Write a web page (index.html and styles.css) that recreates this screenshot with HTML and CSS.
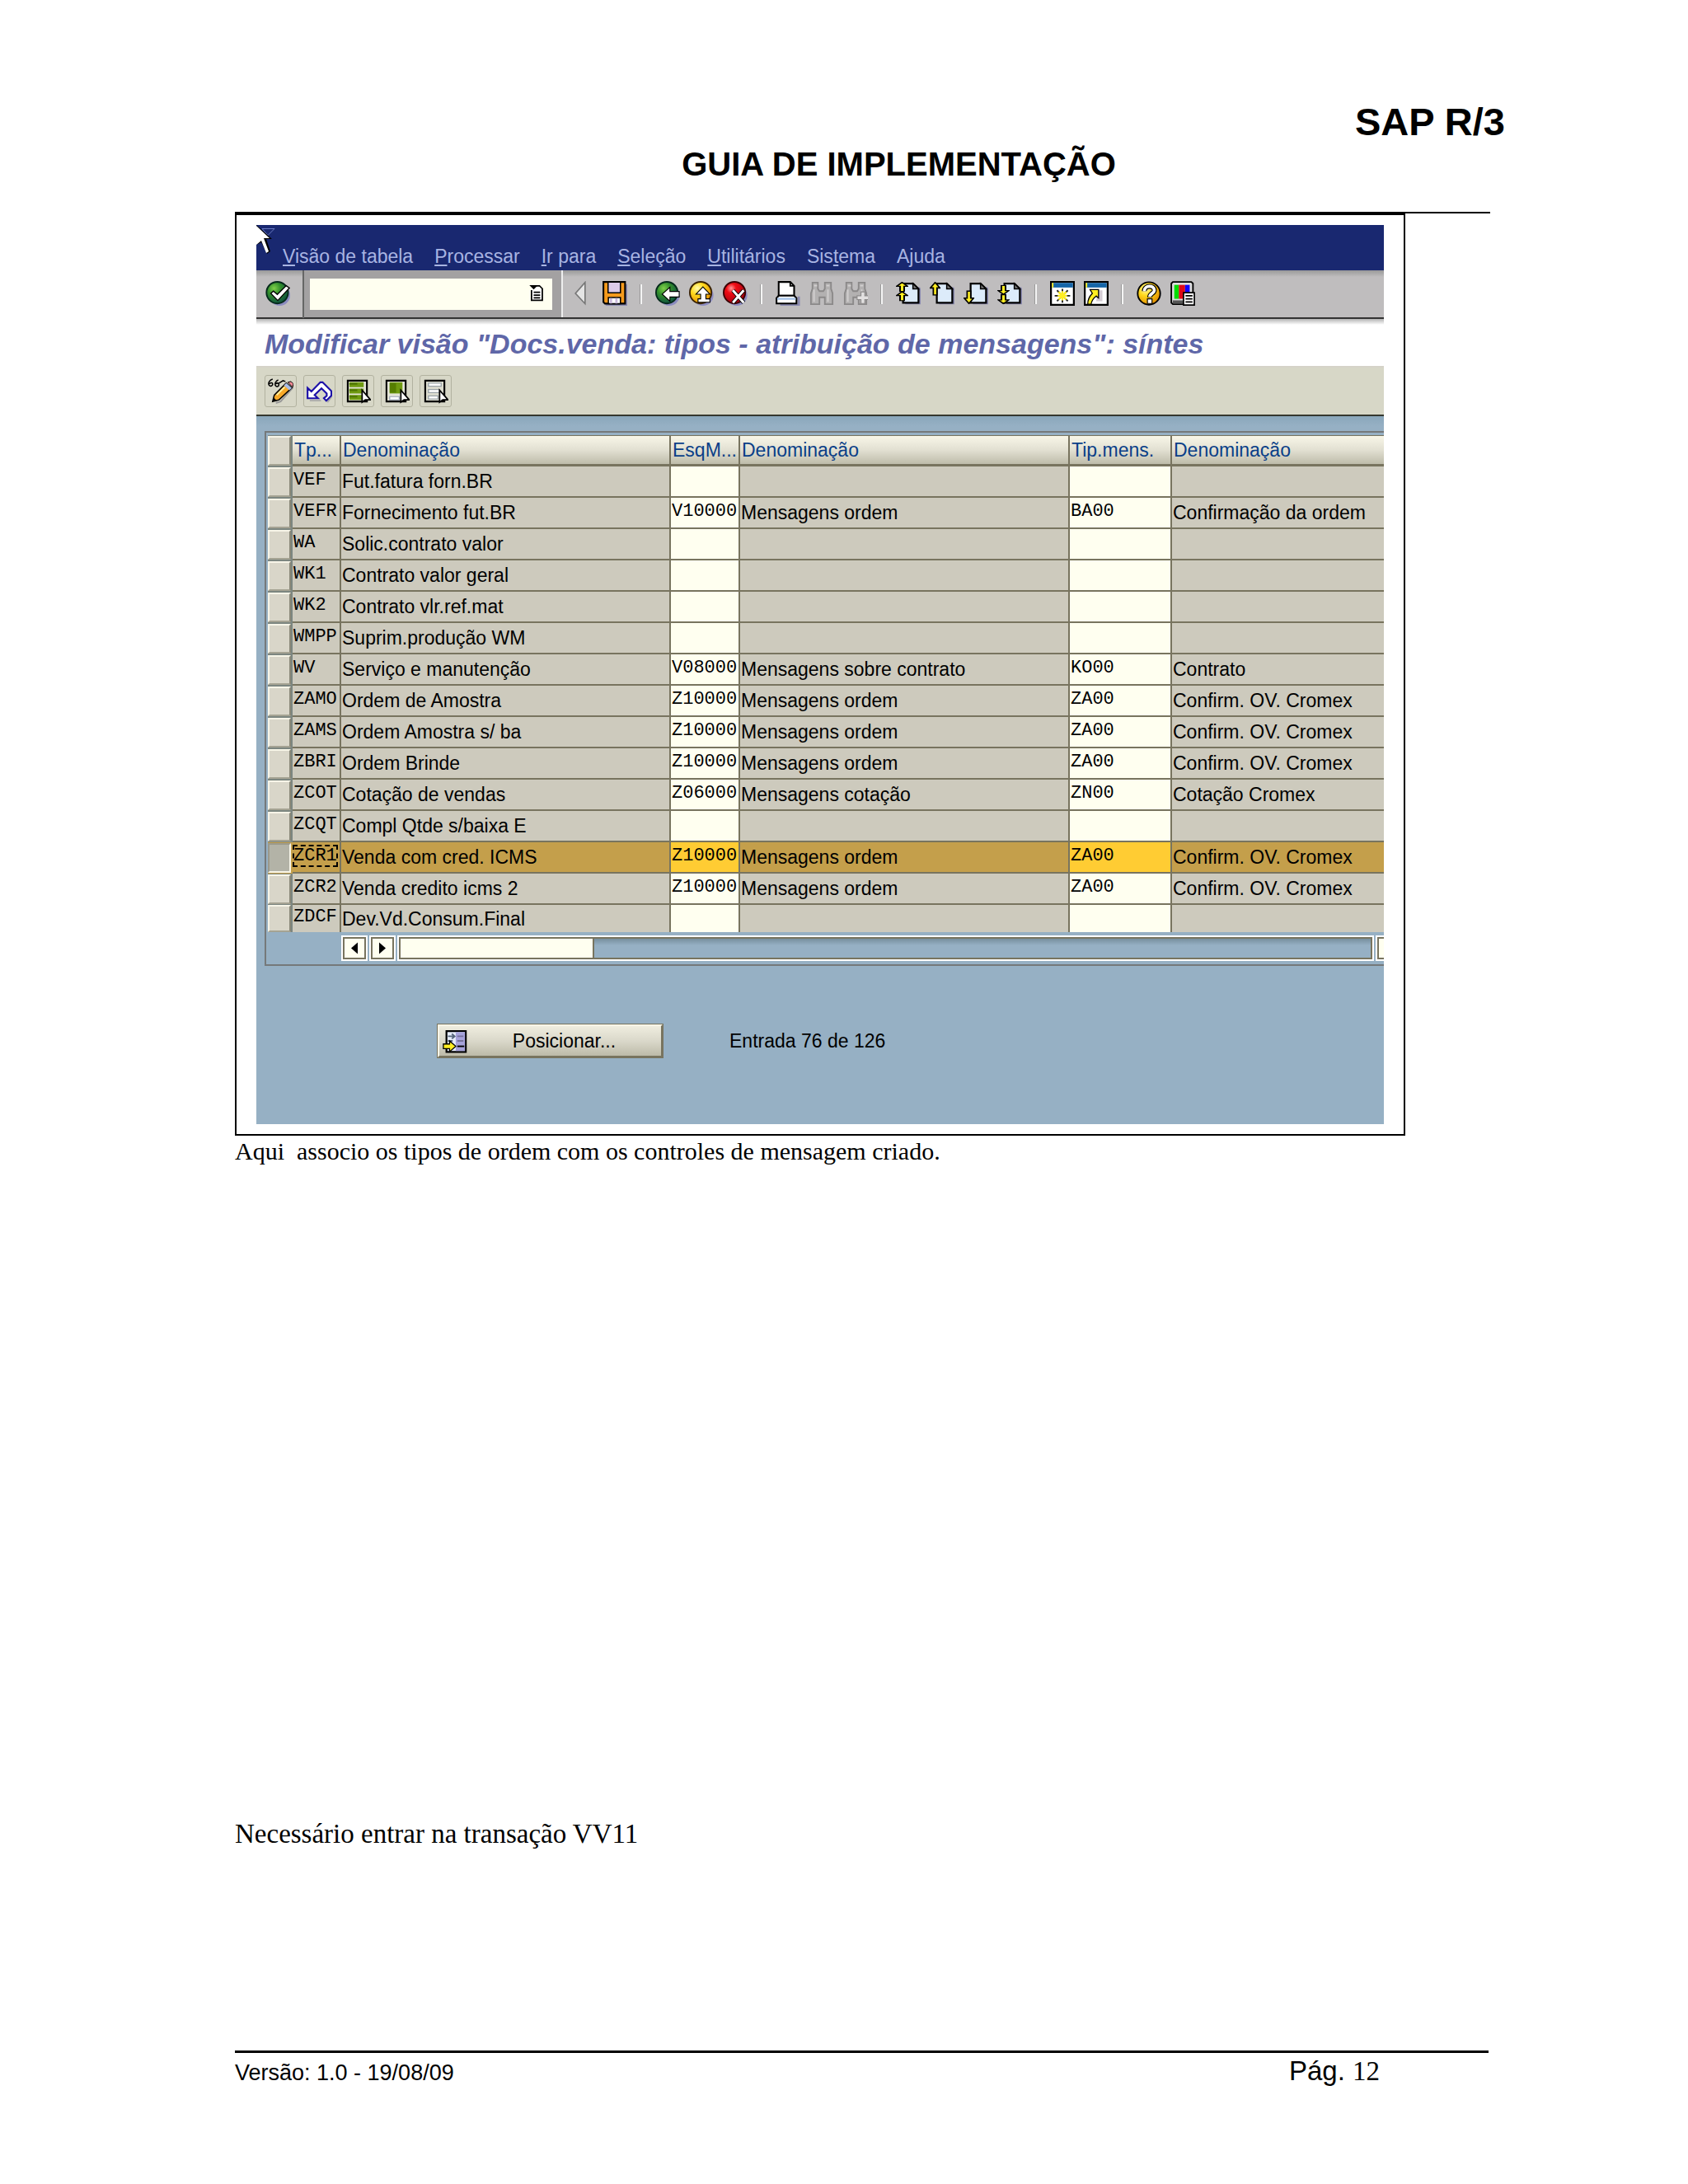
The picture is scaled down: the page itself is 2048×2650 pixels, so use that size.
FILE: index.html
```html
<!DOCTYPE html>
<html lang="pt-BR">
<head>
    <meta charset="UTF-8">
    <meta name="viewport" content="width=device-width, initial-scale=1.0">
    <title>SAP R/3 - Guia de Implementação</title>
    <link rel="stylesheet" href="styles.css">
</head>
<body>
    <!-- Shared pieces for the toolbar icons -->
    <svg class="defs" width="0" height="0" aria-hidden="true">
        <defs>
            <radialGradient id="green" cx="0.35" cy="0.3" r="0.75"><stop offset="0" stop-color="#7fd04a"/><stop offset="0.4" stop-color="#33902c"/><stop offset="1" stop-color="#0d5040"/></radialGradient>
            <radialGradient id="yellow" cx="0.35" cy="0.3" r="0.75"><stop offset="0" stop-color="#fffbb0"/><stop offset="0.4" stop-color="#ffd91c"/><stop offset="1" stop-color="#e08a00"/></radialGradient>
            <radialGradient id="red" cx="0.35" cy="0.3" r="0.75"><stop offset="0" stop-color="#ff9a9a"/><stop offset="0.3" stop-color="#f00c14"/><stop offset="1" stop-color="#a00010"/></radialGradient>
            <symbol id="page" viewBox="0 0 16 16">
                <path d="M6 4h9.500l.5 1v10H6z" fill="#8a8ab0"/>
                <path d="M4.600 1.600h6.500l3.500 3.500v9h-10z" fill="#dcebfa" stroke="#000" stroke-width="1.200"/>
                <path d="M11 1.600v3.500h3.500z" fill="#777" stroke="#000" stroke-width="0.800"/>
            </symbol>
            <symbol id="arrow" viewBox="0 0 6 8" preserveAspectRatio="none">
                <path d="M3 0.400L5.600 3.500H4v4.100H2V3.500H0.400z" fill="#ffee22" stroke="#000" stroke-width="0.800"/>
            </symbol>
            <symbol id="glass" viewBox="0 0 16 16">
                <path d="M1 15V8l1-3V1h3.500v4l1 1.500h2.500L10 5V1h4v4l1 3v7h-5v-4.500H6.500V15z" fill="#b3b1b1" stroke="#8b8989"/>
                <path d="M3 5.500v8M12 5.500v8M3 3h2M11 3h2" stroke="#d2d0d0" fill="none"/>
            </symbol>
        </defs>
    </svg>

    <div class="page">
        <header class="doc-header">
            <p class="product">SAP R/3</p>
            <h1>GUIA DE IMPLEMENTAÇÃO</h1>
        </header>

        <main>
            <figure class="shot">
                <div class="window">
                    <svg class="cursor" viewBox="0 0 24 36" aria-hidden="true">
                        <path d="M7 4.500h15l-8 8z" fill="none" stroke="#6878c0"/>
                        <path d="M0 0l19 17h-7l5 15-4 3-7-14-6 3z" fill="#000"/>
                        <path d="M0 1l16 15H9l6 16-3 2-6-15-6 5z" fill="#fff"/>
                    </svg>

                    <nav class="menu">
                        <a href="#"><u>V</u>isão de tabela</a>
                        <a href="#"><u>P</u>rocessar</a>
                        <a href="#"><u>I</u>r para</a>
                        <a href="#"><u>S</u>eleção</a>
                        <a href="#"><u>U</u>tilitários</a>
                        <a href="#">Sis<u>t</u>ema</a>
                        <a href="#">A<u>j</u>uda</a>
                    </nav>

                    <div class="toolbar">
                        <div class="enter">
                            <button type="button" aria-label="Enter">
                                <svg viewBox="0 0 16 16"><circle cx="9.200" cy="9.200" r="6.800" fill="#8c8cc0"/><circle cx="7.700" cy="7.500" r="7" fill="url(#green)" stroke="#062a1c"/><path d="M3.500 8l1.700-1.500 2.500 2.200L13.500 3l2 1.500L8 12.600z" fill="#fff" stroke="#000" stroke-width="0.700"/></svg>
                            </button>
                        </div>
                        <div class="command">
                            <input type="text" aria-label="Comando">
                            <button type="button" aria-label="Histórico">
                                <svg viewBox="0 0 10 12"><path d="M2 1h5l2 2v8H1.500V4" fill="#fff" stroke="#000"/><path d="M0 0.500h6L3 3.500z" fill="#000"/><path d="M3 5.500h4.500M3 7.500h4.500M3 9.300h4.500" stroke="#000"/></svg>
                            </button>
                        </div>
                        <div class="tools">
                            <button type="button" class="collapse" aria-label="Recolher">
                                <svg viewBox="0 0 9 18"><path d="M8 1v15.500L1 9z" fill="#e4e4e4" stroke="#777"/></svg>
                            </button>
                            <button type="button" aria-label="Gravar">
                                <svg viewBox="0 0 16 16"><path d="M2 2h14v14H2z" fill="#8a8ab0"/><path d="M0.600 0.600h14v14H1.600l-1-1z" fill="#f59a1c" stroke="#000" stroke-width="1.100"/><path d="M3.600 0.600h8v7h-8z" fill="#dccbe8" stroke="#000" stroke-width="0.800"/><path d="M3.800 10.600h7.800v4H3.800z" fill="#fff" stroke="#000" stroke-width="0.800"/><path d="M5.500 11v3.500M9 11v3.500" stroke="#c9b9dc" stroke-width="1.500"/></svg>
                            </button>
                            <span class="sep"></span>
                            <button type="button" aria-label="Voltar">
                                <svg viewBox="0 0 16 16"><circle cx="9" cy="9.200" r="6.800" fill="#8c8cc0"/><circle cx="7.500" cy="7.500" r="7" fill="url(#green)" stroke="#062a1c"/><path d="M4.500 8.500l5-4.500v2.700h6v3.600h-6V13z" fill="#fff" stroke="#000" stroke-width="0.600"/></svg>
                            </button>
                            <button type="button" aria-label="Encerrar">
                                <svg viewBox="0 0 16 16"><circle cx="9" cy="9.200" r="6.800" fill="#8c8cc0"/><circle cx="7.500" cy="7.500" r="7" fill="url(#yellow)" stroke="#3a2200"/><path d="M9 3.800l4.500 4.700h-2.600v3h2.600v2.200H5.800v-2.200h1.700v-3h-3z" fill="#fff" stroke="#000" stroke-width="0.600"/></svg>
                            </button>
                            <button type="button" aria-label="Cancelar">
                                <svg viewBox="0 0 16 16"><circle cx="9" cy="9.200" r="6.800" fill="#8c8cc0"/><circle cx="7.500" cy="7.500" r="7" fill="url(#red)" stroke="#3a0004"/><path d="M6.500 6l7 8M13.500 6l-7 8" stroke="#000" stroke-width="2.600"/><path d="M6.500 6l7 8M13.500 6l-7 8" stroke="#fff" stroke-width="1.600"/></svg>
                            </button>
                            <span class="sep"></span>
                            <button type="button" aria-label="Imprimir">
                                <svg viewBox="0 0 16 16"><path d="M3 15.500h12V10" stroke="#8a8ab0" stroke-width="1.500" fill="none"/><path d="M2 9.500V0.600h7.500l2.500 2.500v6.400z" fill="#fff" stroke="#000" stroke-width="1.100"/><path d="M9.500 0.600v2.500H12" fill="none" stroke="#000"/><path d="M2 9.500h10l1.500 1.500v3.500H0.600V11z" fill="#fff" stroke="#000" stroke-width="1.100"/><path d="M1 11.500h12" stroke="#a9c6ea" stroke-width="1.300"/></svg>
                            </button>
                            <button type="button" aria-label="Procurar">
                                <svg viewBox="0 0 16 16"><use href="#glass"/></svg>
                            </button>
                            <button type="button" aria-label="Continuar procura">
                                <svg viewBox="0 0 16 16"><use href="#glass"/><path d="M11.500 7h2.500v2.500h2.300V12H14v2.500h-2.500V12H9V9.500h2.500z" fill="#e2e0e0" stroke="#8b8989" stroke-width="0.600"/></svg>
                            </button>
                            <span class="sep"></span>
                            <button type="button" aria-label="Primeira página">
                                <svg viewBox="0 0 16 16"><use href="#page"/><use href="#arrow" x="0" y="0.500" width="8" height="6.500"/><use href="#arrow" x="0" y="6.500" width="8" height="6.500"/></svg>
                            </button>
                            <button type="button" aria-label="Página anterior">
                                <svg viewBox="0 0 16 16"><use href="#page"/><use href="#arrow" x="0" y="0.500" width="7" height="9"/></svg>
                            </button>
                            <button type="button" aria-label="Página seguinte">
                                <svg viewBox="0 0 16 16"><use href="#page"/><g transform="rotate(180 3.500 10)"><use href="#arrow" x="0" y="5" width="7" height="9"/></g></svg>
                            </button>
                            <button type="button" aria-label="Última página">
                                <svg viewBox="0 0 16 16"><use href="#page"/><g transform="rotate(180 4 8)"><use href="#arrow" x="0" y="1" width="8" height="6.500"/><use href="#arrow" x="0" y="7" width="8" height="6.500"/></g></svg>
                            </button>
                            <span class="sep"></span>
                            <button type="button" aria-label="Novo modo">
                                <svg viewBox="0 0 16 16"><path d="M0.600 0.600h14.800v14.800H0.600z" fill="#fff" stroke="#000" stroke-width="1.200"/><path d="M1.200 1.200h13.600v3H1.200z" fill="#1565a8"/><path d="M1.200 1.200h1v3h-1z" fill="#ffee22"/><path d="M8 5v9M3 9.500h10M4.500 6l7 7M11.500 6l-7 7" stroke="#222"/><path d="M8 6.500v6M5 9.500h6M5.500 7l5 5M10.500 7l-5 5" stroke="#ffee22" stroke-width="1.200"/></svg>
                            </button>
                            <button type="button" aria-label="Criar atalho">
                                <svg viewBox="0 0 16 16"><path d="M0.600 0.600h14.800v14.800H0.600z" fill="#fff" stroke="#000" stroke-width="1.200"/><path d="M1.200 1.200h13.600v3H1.200z" fill="#1565a8"/><path d="M1.200 1.200h1v3h-1z" fill="#ffee22"/><path d="M9 6h3v7H8z" fill="#d4ccd4"/><path d="M4 5.500h5.500V11L8 9.700c-2 1.500-3 3-3.300 5.300H2.500c0-3 1-5 3-7z" fill="#ffee22" stroke="#000" stroke-width="0.700"/></svg>
                            </button>
                            <span class="sep"></span>
                            <button type="button" aria-label="Ajuda">
                                <svg viewBox="0 0 16 16"><circle cx="8" cy="8" r="7.300" fill="url(#yellow)" stroke="#000"/><path d="M5 6.500C5 2.500 11.500 2.500 11.500 6c0 2-3 2-3 4.500" fill="none" stroke="#000" stroke-width="3.200"/><path d="M5 6.500C5 2.500 11.500 2.500 11.500 6c0 2-3 2-3 4.300" fill="none" stroke="#fff" stroke-width="2"/><path d="M7 11.500h3v3H7z" fill="#fff" stroke="#000" stroke-width="0.600"/></svg>
                            </button>
                            <button type="button" aria-label="Layout local">
                                <svg viewBox="0 0 16 16"><path d="M0.600 1.600l1-1h12l1 1V14l-1 1h-12l-1-1z" fill="#ddd" stroke="#000"/><path d="M1.500 13.500h12" stroke="#555" stroke-width="2"/><path d="M2.500 2.500h3v9h-3z" fill="#0d0"/><path d="M5.500 2.500h4v9h-4z" fill="#e00818"/><path d="M9.500 2.500h3v9h-3z" fill="#10f"/><path d="M8.500 7.500h7v8h-7z" fill="#fff" stroke="#000" stroke-width="0.900"/><path d="M9.800 9.500h4.500M9.800 11.500h4.500M9.800 13.500h4.500" stroke="#000" stroke-width="0.900"/></svg>
                            </button>
                        </div>
                    </div>

                    <h2 class="title">Modificar visão "Docs.venda: tipos - atribuição de mensagens": síntes</h2>

                    <div class="actions">
                        <button type="button" aria-label="Exibir / Modificar">
                            <svg viewBox="0 0 16 16"><path d="M3 0.500C1 1 0 3 0.700 4.200 1.500 5.500 3.200 4.700 3 3.500 2.800 2.400 1.500 2.800 1 3.500M6.500 1C5 1.500 4.200 3.200 4.700 4.500c.6 1.200 2.200.7 2.200-.5s-1.200-1.200-2-.5M7 3l2.500-1.500L11 2" fill="none" stroke="#000" stroke-width="0.800"/><path d="M5 15.500l3-1 8-9" stroke="#999" fill="none"/><path d="M3 14.500l1-4 7.500-7.500 3.500 3L7 13.500z" fill="#f7a928" stroke="#000" stroke-width="0.800"/><path d="M10 4.500l3.500 3L15 6l-3.500-3z" fill="#a9bde6"/><path d="M12.500 2.500l3 3 .5-2-1.500-1.500z" fill="#f38a96" stroke="#000" stroke-width="0.500"/><path d="M3 14.500l.6-2.500 2 2z" fill="#000"/><path d="M5.500 10.500l5-5" stroke="#fff0a0"/></svg>
                        </button>
                        <button type="button" aria-label="Desfazer">
                            <svg viewBox="0 0 16 16"><path d="M2 14h7M13 15l3-4" stroke="#aaa"/><path d="M0.600 6v6.500h6.500L5 10.400 9.300 6.300l3.300 3.200v1.500l-1.800 1.500 1.500 1.600 3.200-3.300V8L10 2.500H8.600L3 8.300z" fill="#fff" stroke="#1c10a8" stroke-width="1.100"/></svg>
                        </button>
                        <button type="button" aria-label="Marcar todos">
                            <svg viewBox="0 0 16 16"><path d="M1.500 1.500h12v13h-12z" fill="#e4e4d8" stroke="#000" stroke-width="1.100"/><path d="M2.500 2.500h9v3h-9zM2.500 6.500h9v3h-9zM2.500 10.500h8v3h-8z" fill="#6f9a10"/><path d="M2.500 3.500h5M2.500 7.500h5M2.500 11.500h5" stroke="#4d7400"/><path d="M10.500 7.500v7.500l2-1.500h3.300z" fill="#fff" stroke="#000" stroke-width="0.900"/></svg>
                        </button>
                        <button type="button" aria-label="Marcar bloco">
                            <svg viewBox="0 0 16 16"><path d="M1.500 1.500h12v13h-12z" fill="#e4e4d8" stroke="#000" stroke-width="1.100"/><path d="M3.500 2.500h8v7h-8z" fill="#6f9a10"/><path d="M3.500 3h4v6h-4z" fill="#567e00"/><path d="M3.500 11.500h6v2h-6z" fill="#fff" stroke="#9aa3b5" stroke-width="0.600"/><path d="M10.500 7.500v7.500l2-1.500h3.300z" fill="#fff" stroke="#000" stroke-width="0.900"/></svg>
                        </button>
                        <button type="button" aria-label="Desmarcar todos">
                            <svg viewBox="0 0 16 16"><path d="M1.500 1.500h12v13h-12z" fill="#dcdccf" stroke="#000" stroke-width="1.100"/><path d="M3.500 3h8v2h-8zM3.500 7h7v2h-7zM3.500 11h6v2h-6z" fill="#fff" stroke="#9aa3a8" stroke-width="0.700"/><path d="M10.500 7.500v7.500l2-1.500h3.300z" fill="#fff" stroke="#000" stroke-width="0.900"/></svg>
                        </button>
                    </div>

                    <div class="work">
                        <div class="panel">
                            <table class="grid">
                                <colgroup>
                                    <col class="c-sel"><col class="c-type"><col class="c-name"><col class="c-proc"><col class="c-name"><col class="c-msg"><col>
                                </colgroup>
                                <thead>
                                    <tr><th class="sel"><button type="button" aria-label="Selecionar tudo"></button></th><th>Tp...</th><th>Denominação</th><th>EsqM...</th><th>Denominação</th><th>Tip.mens.</th><th>Denominação</th></tr>
                                </thead>
                                <tbody>
                                    <tr><td class="sel"><button type="button" aria-label="Selecionar VEF"></button></td><td class="code">VEF</td><td>Fut.fatura forn.BR</td><td class="edit"><input aria-label="Esquema VEF" value=""></td><td></td><td class="edit"><input aria-label="Mensagem VEF" value=""></td><td></td></tr>
                                    <tr><td class="sel"><button type="button" aria-label="Selecionar VEFR"></button></td><td class="code">VEFR</td><td>Fornecimento fut.BR</td><td class="edit"><input aria-label="Esquema VEFR" value="V10000"></td><td>Mensagens ordem</td><td class="edit"><input aria-label="Mensagem VEFR" value="BA00"></td><td>Confirmação da ordem</td></tr>
                                    <tr><td class="sel"><button type="button" aria-label="Selecionar WA"></button></td><td class="code">WA</td><td>Solic.contrato valor</td><td class="edit"><input aria-label="Esquema WA" value=""></td><td></td><td class="edit"><input aria-label="Mensagem WA" value=""></td><td></td></tr>
                                    <tr><td class="sel"><button type="button" aria-label="Selecionar WK1"></button></td><td class="code">WK1</td><td>Contrato valor geral</td><td class="edit"><input aria-label="Esquema WK1" value=""></td><td></td><td class="edit"><input aria-label="Mensagem WK1" value=""></td><td></td></tr>
                                    <tr><td class="sel"><button type="button" aria-label="Selecionar WK2"></button></td><td class="code">WK2</td><td>Contrato vlr.ref.mat</td><td class="edit"><input aria-label="Esquema WK2" value=""></td><td></td><td class="edit"><input aria-label="Mensagem WK2" value=""></td><td></td></tr>
                                    <tr><td class="sel"><button type="button" aria-label="Selecionar WMPP"></button></td><td class="code">WMPP</td><td>Suprim.produção WM</td><td class="edit"><input aria-label="Esquema WMPP" value=""></td><td></td><td class="edit"><input aria-label="Mensagem WMPP" value=""></td><td></td></tr>
                                    <tr><td class="sel"><button type="button" aria-label="Selecionar WV"></button></td><td class="code">WV</td><td>Serviço e manutenção</td><td class="edit"><input aria-label="Esquema WV" value="V08000"></td><td>Mensagens sobre contrato</td><td class="edit"><input aria-label="Mensagem WV" value="KO00"></td><td>Contrato</td></tr>
                                    <tr><td class="sel"><button type="button" aria-label="Selecionar ZAMO"></button></td><td class="code">ZAMO</td><td>Ordem de Amostra</td><td class="edit"><input aria-label="Esquema ZAMO" value="Z10000"></td><td>Mensagens ordem</td><td class="edit"><input aria-label="Mensagem ZAMO" value="ZA00"></td><td>Confirm. OV. Cromex</td></tr>
                                    <tr><td class="sel"><button type="button" aria-label="Selecionar ZAMS"></button></td><td class="code">ZAMS</td><td>Ordem Amostra s/ ba</td><td class="edit"><input aria-label="Esquema ZAMS" value="Z10000"></td><td>Mensagens ordem</td><td class="edit"><input aria-label="Mensagem ZAMS" value="ZA00"></td><td>Confirm. OV. Cromex</td></tr>
                                    <tr><td class="sel"><button type="button" aria-label="Selecionar ZBRI"></button></td><td class="code">ZBRI</td><td>Ordem Brinde</td><td class="edit"><input aria-label="Esquema ZBRI" value="Z10000"></td><td>Mensagens ordem</td><td class="edit"><input aria-label="Mensagem ZBRI" value="ZA00"></td><td>Confirm. OV. Cromex</td></tr>
                                    <tr><td class="sel"><button type="button" aria-label="Selecionar ZCOT"></button></td><td class="code">ZCOT</td><td>Cotação de vendas</td><td class="edit"><input aria-label="Esquema ZCOT" value="Z06000"></td><td>Mensagens cotação</td><td class="edit"><input aria-label="Mensagem ZCOT" value="ZN00"></td><td>Cotação Cromex</td></tr>
                                    <tr><td class="sel"><button type="button" aria-label="Selecionar ZCQT"></button></td><td class="code">ZCQT</td><td>Compl Qtde s/baixa E</td><td class="edit"><input aria-label="Esquema ZCQT" value=""></td><td></td><td class="edit"><input aria-label="Mensagem ZCQT" value=""></td><td></td></tr>
                                    <tr class="selected"><td class="sel"><button type="button" aria-label="Selecionar ZCR1"></button></td><td class="code"><span class="focus">ZCR1</span></td><td>Venda com cred. ICMS</td><td class="edit"><input aria-label="Esquema ZCR1" value="Z10000"></td><td>Mensagens ordem</td><td class="edit"><input aria-label="Mensagem ZCR1" value="ZA00"></td><td>Confirm. OV. Cromex</td></tr>
                                    <tr><td class="sel"><button type="button" aria-label="Selecionar ZCR2"></button></td><td class="code">ZCR2</td><td>Venda credito icms 2</td><td class="edit"><input aria-label="Esquema ZCR2" value="Z10000"></td><td>Mensagens ordem</td><td class="edit"><input aria-label="Mensagem ZCR2" value="ZA00"></td><td>Confirm. OV. Cromex</td></tr>
                                    <tr><td class="sel"><button type="button" aria-label="Selecionar ZDCF"></button></td><td class="code">ZDCF</td><td>Dev.Vd.Consum.Final</td><td class="edit"><input aria-label="Esquema ZDCF" value=""></td><td></td><td class="edit"><input aria-label="Mensagem ZDCF" value=""></td><td></td></tr>
                                </tbody>
                            </table>
                            <div class="scroll">
                                <button type="button" aria-label="Esquerda"><svg viewBox="0 0 8 14"><path d="M8 0v14L0 7z"/></svg></button>
                                <button type="button" aria-label="Direita"><svg viewBox="0 0 8 14"><path d="M0 0v14l8-7z"/></svg></button>
                                <div class="track"><div class="thumb"></div></div>
                                <div class="end"></div>
                            </div>
                        </div>

                        <div class="position">
                            <button type="button">
                                <svg viewBox="0 0 16 16"><path d="M2.500 1.600h12.500v13.500H2.500z" fill="#e6ecfa" stroke="#000" stroke-width="1.200"/><path d="M8.500 2.300h6v12.200h-6z" fill="#a6a2da"/><path d="M9.500 5h4M9.500 8h4" stroke="#77729c"/><path d="M9.500 11.500h4.500" stroke="#000"/><path d="M3.500 5h4M6 3.500L7.800 5 6 6.500M3.500 8h3" stroke="#56657a" fill="none"/><path d="M0.500 10h4V8l4 3.500-4 3.500v-2h-4z" fill="#ffee22" stroke="#000" stroke-width="0.700"/></svg>
                                <span>Posicionar...</span>
                            </button>
                            <span>Entrada 76 de 126</span>
                        </div>
                    </div>
                </div>
            </figure>
            <p class="caption">Aqui&nbsp; associo os tipos de ordem com os controles de mensagem criado.</p>
            <p class="next">Necessário entrar na transação VV11</p>
        </main>

        <footer class="doc-footer">
            <span>Versão: 1.0 - 19/08/09</span>
            <span class="pageno">Pág. <span>12</span></span>
        </footer>
    </div>
</body>
</html>
```

FILE: styles.css
```css
/* General Reset */
* {
    margin: 0;
    padding: 0;
    box-sizing: border-box;
}

body {
    font-family: "Liberation Sans", Arial, sans-serif;
    background: #fff;
    color: #000;
}

button {
    display: block;
    background: none;
    border: none;
    font: inherit;
    cursor: pointer;
}

button svg {
    display: block;
    width: 100%;
    height: 100%;
}

.defs {
    position: absolute;
}

/* Document page */
.page {
    display: flex;
    flex-direction: column;
    min-height: 100vh;
    padding: 121px 222px 118px 285px;
}

.doc-header {
    margin-right: 18px;
    border-bottom: 2px solid #000;
    padding-bottom: 34px;
}

.product {
    margin-right: -18px;
    font-size: 47px;
    line-height: 54px;
    font-weight: bold;
    text-align: right;
}

.doc-header h1 {
    margin-right: -18px;
    padding-left: 70px;
    font-size: 40px;
    line-height: 48px;
    text-align: center;
}

.shot {
    margin-right: 121px;
    border: 2px solid #000;
    padding: 12px 24px;
}

.caption {
    font: 30px/38px "Liberation Serif", "Times New Roman", serif;
}

.next {
    margin-top: 790px;
    font: 33px/38px "Liberation Serif", "Times New Roman", serif;
}

.doc-footer {
    display: flex;
    justify-content: space-between;
    align-items: baseline;
    margin-top: auto;
    margin-right: 20px;
    border-top: 3px solid #000;
    padding: 3px 132px 0 0;
    font-size: 27px;
}

.pageno {
    font-size: 33px;
}

.pageno span {
    font-family: "Liberation Serif", "Times New Roman", serif;
}

/* SAP window */
.window {
    position: relative;
    overflow: hidden;
    background: #fff;
    font-size: 23px;
}

.cursor {
    position: absolute;
    left: 0;
    top: 0;
    width: 24px;
    height: 36px;
}

.menu {
    display: flex;
    gap: 26px;
    height: 55px;
    padding: 25px 32px 0;
    background: #192870;
    line-height: 26px;
}

.menu a {
    color: #a8b4e2;
    text-decoration: none;
}

.toolbar {
    display: flex;
    height: 66px;
    padding-bottom: 8px;
    background: linear-gradient(#bfbdbe 57px, #333 57px, #333 59px, #b4b4b4 59px, #fff);
}

.toolbar button {
    width: 30px;
    height: 30px;
}

.enter {
    width: 58px;
    padding: 13px 11px;
    border-right: 2px solid #666;
    background: linear-gradient(#999, #bfbdbe 8px 57px, transparent 57px);
}

.command {
    position: relative;
    width: 312px;
    height: 57px;
    padding: 10px 11px 9px 7px;
    background: #a3a1a2;
}

.command input {
    display: block;
    width: 100%;
    height: 38px;
    border: none;
    background: #fffff0;
}

.command button {
    position: absolute;
    right: 21px;
    top: 17px;
    width: 18px;
    height: 21px;
}

.tools {
    display: flex;
    flex: 1;
    gap: 11px;
    height: 57px;
    padding-top: 13px;
    padding-left: 12px;
    border-left: 2px solid #eee;
    background: linear-gradient(#999, #bfbdbe 8px);
}

.tools .collapse {
    width: 18px;
    margin-right: 7px;
}

.sep {
    width: 2px;
    height: 24px;
    margin: 4px 5px;
    background: #f4f4f4;
    box-shadow: -1px 0 #999;
}

.title {
    height: 50px;
    padding-left: 10px;
    color: #5f67a8;
    font-size: 34px;
    line-height: 46px;
    font-style: italic;
    white-space: nowrap;
}

.actions {
    display: flex;
    gap: 8px;
    height: 61px;
    padding: 9px 10px 0;
    border-top: 2px solid #d5d3c8;
    border-bottom: 2px solid #35382f;
    background: #d7d7c7;
}

.actions button {
    width: 39px;
    height: 39px;
    border: 1px solid #b2b2a0;
    border-radius: 3px;
    padding: 3px;
}

/* Table area */
.work {
    height: 859px;
    padding: 18px 0 0 10px;
    background: linear-gradient(#8aa7bb, #96b0c4 12px);
}

.panel {
    border: 2px solid #75797a;
    border-right: none;
    padding: 3px 0 4px 2px;
}

.grid {
    width: 100%;
    table-layout: fixed;
    border-collapse: separate;
    border-spacing: 0;
}

.c-sel { width: 30px; }
.c-type { width: 59px; }
.c-name { width: 400px; }
.c-proc { width: 84px; }
.c-msg { width: 124px; }

.grid th,
.grid td {
    height: 38px;
    border-right: 2px solid #78745f;
    border-bottom: 2px solid #78745f;
    padding: 0 0 0 1px;
    background: #cdcabd;
    font-weight: normal;
    line-height: 26px;
    text-align: left;
    white-space: nowrap;
}

.grid th {
    border-top: 1px solid #78745f;
    border-bottom-width: 3px;
    padding-left: 2px;
    background: linear-gradient(#f8f6e8, #e2e0d2 50%, #bebcaa);
    color: #0a3f88;
}

.grid th:last-child,
.grid td:last-child {
    border-right: none;
}

.grid .sel {
    border: none;
    padding: 0;
    background: #7c8680;
}

.sel button {
    width: 28px;
    height: 36px;
    border: 2px solid #f7f5e8;
    border-right-color: #8a8878;
    border-bottom-color: #a5a393;
    background: #d9d6c9;
}

.grid td.code,
.grid .edit input {
    font-family: "Liberation Mono", "Courier New", monospace;
    font-size: 22px;
}

.grid td.code {
    padding-bottom: 3px;
}

.grid td.edit {
    padding: 0;
    background: #fffff0;
}

.edit input {
    display: block;
    width: 100%;
    height: 36px;
    border: none;
    padding: 0 0 3px 1px;
    background: none;
}

.grid .selected td {
    background: #c49f4b;
}

.grid .selected .edit {
    background: #ffcc33;
}

.selected .sel button {
    border-color: #9a998c #f7f5e8 #f7f5e8 #9a998c;
    background: #b3b3a7;
}

.focus {
    outline: 2px dashed #000;
    outline-offset: -1px;
}

.grid tbody tr:last-child td {
    height: 33px;
    border-bottom: none;
}

.grid tbody tr:last-child button,
.grid tbody tr:last-child input {
    height: 33px;
}

.scroll {
    display: flex;
    gap: 2px;
    height: 31px;
    margin-top: 4px;
    padding-left: 89px;
}

.scroll button,
.track,
.end {
    border: 2px solid #fff;
    outline: 2px solid #78745f;
    outline-offset: -4px;
}

.scroll button {
    width: 32px;
    padding: 6px 10px;
    background: #fffff0;
}

.track {
    flex: 1;
    padding: 2px;
    background: linear-gradient(#6f8794, #96b0c4 10px);
}

.thumb {
    width: 20%;
    height: 100%;
    border-right: 2px solid #78745f;
    background: #fffff0;
}

/* Runs past the window edge, so only its left side shows */
.end {
    width: 20px;
    margin-right: -10px;
    background: #fffff0;
}

.position {
    display: flex;
    align-items: center;
    gap: 81px;
    margin: 71px 0 0 210px;
}

.position button {
    display: flex;
    align-items: center;
    width: 273px;
    height: 40px;
    border: 2px solid #f7f5e8;
    border-right-color: #78745f;
    border-bottom-color: #78745f;
    outline: 1px solid #78745f;
    background: linear-gradient(#efeddf, #dad8ca 50%, #bdbba9);
}

.position svg {
    width: 30px;
    height: 30px;
    margin-left: 4px;
}

.position button span {
    flex: 1;
    text-align: center;
}
```
